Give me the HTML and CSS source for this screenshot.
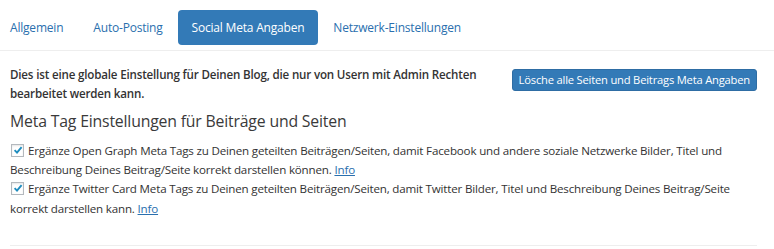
FILE: index.html
```html
<!DOCTYPE html>
<html>
  <head>
    <link rel="stylesheet" href="styles.css">
  </head>
  <body>
    <ul class="tabs">
      <li><a href="#">Allgemein</a></li>
      <li><a href="#">Auto-Posting</a></li>
      <li class="active"><a href="#">Social Meta Angaben</a></li>
      <li><a href="#">Netzwerk-Einstellungen</a></li>
    </ul>
    <div class="panel">
      <div class="intro">
        <p class="note">Dies ist eine globale Einstellung für Deinen Blog, die nur von Usern mit Admin Rechten bearbeitet werden kann.</p>
        <button type="button" class="btn">Lösche alle Seiten und Beitrags Meta Angaben</button>
      </div>
      <h3>Meta Tag Einstellungen für Beiträge und Seiten</h3>
      <label class="option">
        <input type="checkbox" checked><span class="box"><svg viewBox="0 0 12 12" width="12" height="12"><path d="M2.6 6.2 L5 8.6 L9.6 3.2" fill="none" stroke="#1e8cbe" stroke-width="1.9"/></svg></span><span>Ergänze Open Graph Meta Tags zu Deinen geteilten Beiträgen/Seiten, damit Facebook und andere soziale Netzwerke Bilder, Titel und Beschreibung Deines Beitrag/Seite korrekt darstellen können.</span> <a href="#">Info</a>
      </label>
      <label class="option">
        <input type="checkbox" checked><span class="box"><svg viewBox="0 0 12 12" width="12" height="12"><path d="M2.6 6.2 L5 8.6 L9.6 3.2" fill="none" stroke="#1e8cbe" stroke-width="1.9"/></svg></span><span>Ergänze Twitter Card Meta Tags zu Deinen geteilten Beiträgen/Seiten, damit Twitter Bilder, Titel und Beschreibung Deines Beitrag/Seite korrekt darstellen kann.</span> <a href="#">Info</a>
      </label>
      <hr>
    </div>
  </body>
</html>
```

FILE: styles.css
```css
body {
  margin: 0;
  font-family: "Open Sans", "Noto Sans", sans-serif;
  font-size: 11.6px;
  letter-spacing: -0.18px;
  color: #333;
  background: #fff;
}
a {
  color: #2a6fae;
}
.tabs {
  list-style: none;
  margin: 10px 0 0 0;
  padding: 0 0 5px 0;
  display: flex;
  border-bottom: 1px solid #eee;
}
.tabs li a {
  display: block;
  padding: 9px 15px 9px 15px;
  line-height: 17px;
  font-size: 12px;
  letter-spacing: -0.2px;
  text-decoration: none;
  color: #2a6fae;
  border-radius: 4px;
}
.tabs li:first-child a {
  padding-left: 10px;
}
.tabs li.active a {
  background: #337ab7;
  color: #fff;
  padding: 9px 14px;
}
.panel {
  padding: 0 17px 0 10px;
}
.intro {
  display: flex;
  justify-content: space-between;
  align-items: flex-start;
  margin-top: 14px;
}
.note {
  margin: 0;
  width: 490px;
  font-weight: 600;
  line-height: 19px;
}
.btn {
  margin-top: 4px;
  font-family: inherit;
  font-size: 11.2px;
  letter-spacing: -0.2px;
  white-space: nowrap;
  color: #fff;
  background: #337ab7;
  border: 1px solid #2e6da4;
  border-radius: 3px;
  padding: 2px 6px;
  line-height: 16px;
}
h3 {
  margin: 7px 0 9px 0;
  font-size: 15.8px;
  font-weight: 400;
  line-height: 22px;
  color: #3a3a3a;
}
.option {
  display: block;
  line-height: 19.2px;
}
.option input {
  display: none;
}
.box {
  display: inline-block;
  width: 11px;
  height: 11px;
  margin: 0 4px 0 1px;
  vertical-align: -2px;
  border: 1px solid #b4b9be;
  background: #fff;
  box-shadow: inset 0 1px 2px rgba(0, 0, 0, 0.1);
  position: relative;
}
.box svg {
  position: absolute;
  left: 0;
  top: -1px;
}
hr {
  border: 0;
  border-top: 1px solid #eee;
  margin: 27px 0 0 0;
}
```
